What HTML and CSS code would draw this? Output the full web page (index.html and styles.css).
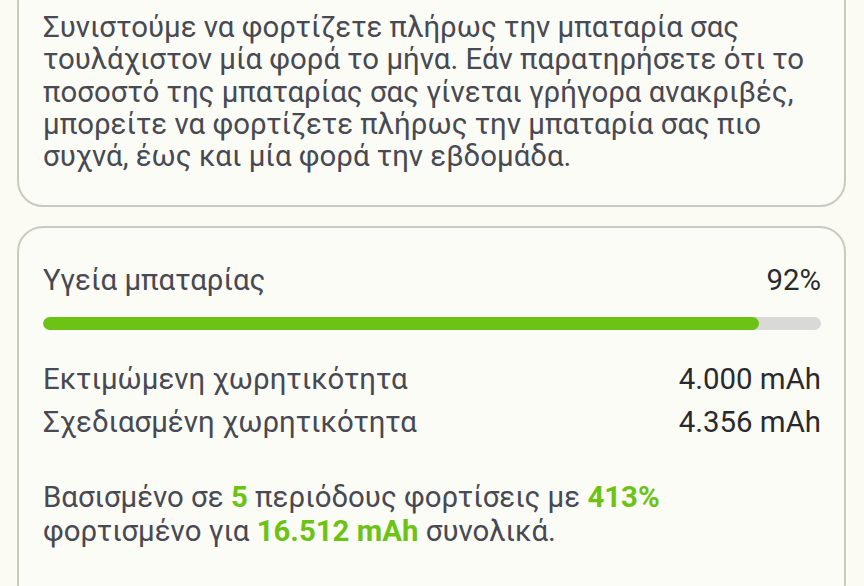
FILE: index.html
```html
<!DOCTYPE html>
<html lang="el">
<head>
<meta charset="utf-8">
<link rel="stylesheet" href="styles.css">
</head>
<body>
<main class="page">
  <section class="card card-tip">
    <p class="tip">Συνιστούμε να φορτίζετε πλήρως την μπαταρία σας τουλάχιστον μία φορά το μήνα. Εάν παρατηρήσετε ότι το ποσοστό της μπαταρίας σας γίνεται γρήγορα ανακριβές, μπορείτε να φορτίζετε πλήρως την μπαταρία σας πιο συχνά, έως και μία φορά την εβδομάδα.</p>
  </section>
  <section class="card card-health">
    <div class="row head">
      <span class="label">Υγεία μπαταρίας</span>
      <span class="value">92%</span>
    </div>
    <div class="bar"><div class="fill" style="width:92%"></div></div>
    <div class="rows">
      <div class="row">
        <span class="label">Εκτιμώμενη χωρητικότητα</span>
        <span class="value">4.000 mAh</span>
      </div>
      <div class="row">
        <span class="label">Σχεδιασμένη χωρητικότητα</span>
        <span class="value">4.356 mAh</span>
      </div>
    </div>
    <p class="note">Βασισμένο σε <b>5</b> περιόδους φορτίσεις με <b>413%</b> φορτισμένο για <b>16.512 mAh</b> συνολικά.</p>
  </section>
</main>
</body>
</html>
```
FILE: styles.css
```css
html, body {
  margin: 0;
  padding: 0;
  background: #fbfbf4;
  height: 100%;
  overflow: hidden;
}
body {
  font-family: Roboto, "Noto Sans", sans-serif;
  font-size: 29.4px;
  color: #484953;
}
.page {
  display: flex;
  flex-direction: column;
  gap: 19px;
  margin: -23px 18px 0 17px;
}
.card {
  border: 2px solid #c9cbc1;
  border-radius: 26px;
  background: #fcfcf6;
}
.card-tip {
  padding: 32px 22px 33px 24px;
}
.tip {
  margin: 0;
  line-height: 32.25px;
}
.card-health {
  padding: 36px 23px 60px 24px;
}
.row {
  display: flex;
  justify-content: space-between;
  align-items: baseline;
  line-height: 43px;
}
.head {
  line-height: 32px;
}
.value {
  color: #2a2a2e;
}
.bar {
  margin-top: 21px;
  height: 13px;
  border-radius: 7px;
  background: #d9d9d7;
  overflow: hidden;
}
.fill {
  height: 100%;
  border-radius: 7px;
  background: #6cc215;
}
.rows {
  margin-top: 28px;
}
.note {
  margin: 36px 0 0 0;
  line-height: 34px;
}
.note b {
  color: #6cc215;
  font-weight: 700;
}
```
